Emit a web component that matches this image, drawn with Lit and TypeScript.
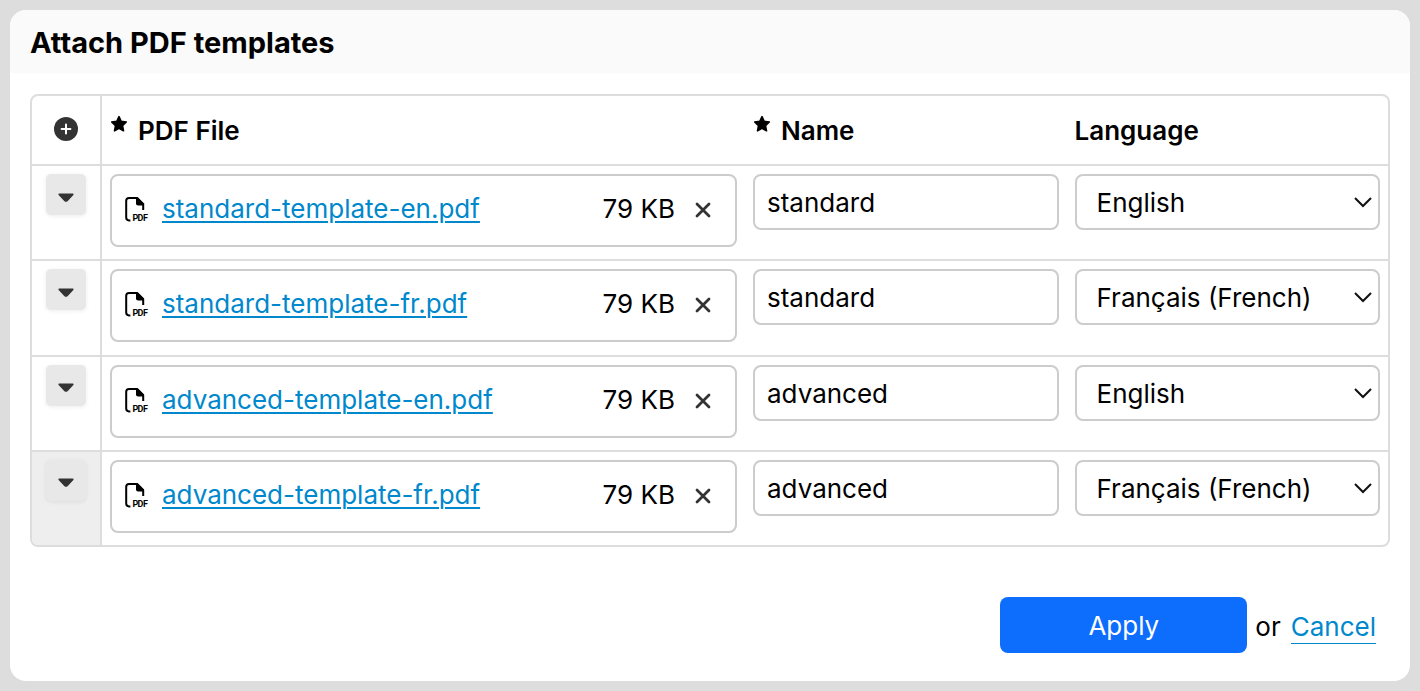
import { LitElement, html, css } from "lit";
import { customElement, state } from "lit/decorators.js";

interface Template {
  file: string;
  size: string;
  name: string;
  language: string;
}

const LANGUAGES = ["English", "Français (French)"];

const starIcon = html`<svg class="star" viewBox="0 0 18 18" aria-hidden="true">
  <path d="M9 1.6 11.2 6.3 16.3 7 12.5 10.6 13.5 15.8 9 13.3 4.5 15.8 5.5 10.6 1.7 7 6.8 6.3Z"
    fill="#000" stroke="#000" stroke-width="1.6" stroke-linejoin="round"/></svg>`;

@customElement("app-root")
export class AppRoot extends LitElement {
  @state() private items: Template[] = [
    { file: "standard-template-en.pdf", size: "79 KB", name: "standard", language: LANGUAGES[0] },
    { file: "standard-template-fr.pdf", size: "79 KB", name: "standard", language: LANGUAGES[1] },
    { file: "advanced-template-en.pdf", size: "79 KB", name: "advanced", language: LANGUAGES[0] },
    { file: "advanced-template-fr.pdf", size: "79 KB", name: "advanced", language: LANGUAGES[1] },
  ];

  @state() private activeRow = 3;

  static styles = css`
    :host {
      display: block;
      box-sizing: border-box;
      min-height: 100vh;
      padding: 10px;
      background: #ddd;
      color: #000;
      font: 400 26px/32px Inter, "Liberation Sans", sans-serif;
    }
    *, *::before, *::after { box-sizing: border-box; }
    button, input, select { font: inherit; color: inherit; margin: 0; }
    .dialog { background: #fff; border-radius: 16px; overflow: hidden; }
    .title {
      margin: 0;
      padding: 17px 20px 14px;
      background: #fafafa;
      font-size: 29px;
      line-height: 32px;
      font-weight: 700;
    }
    .body { padding: 21px 20px 28px; }
    .grid {
      display: block;
      border: 2px solid #ddd;
      border-radius: 8px;
      overflow: hidden;
    }
    thead { display: block; }
    tbody { display: grid; grid-auto-rows: 1fr; min-height: 381px; margin-bottom: -2px; }
    .row {
      display: grid;
      grid-template-columns: 70px 2fr 1fr 1fr;
      border-bottom: 2px solid #ddd;
    }
    th, td { padding: 8px; text-align: left; font-weight: inherit; min-width: 0; }
    .head th { display: flex; align-items: center; gap: 10px; padding: 19px 8px 17px; font-weight: 600; }
    .tool { border-right: 2px solid #ddd; }
    .head .tool { justify-content: center; padding: 17px 8px 19px; }
    tbody .tool { display: flex; justify-content: center; align-items: flex-start; }
    .active .tool { background: #eee; }
    .star { width: 18px; height: 18px; margin-bottom: 14px; }
    .add, .remove { display: flex; padding: 0; border: 0; background: none; }
    .add svg { width: 24px; height: 24px; }
    .menu {
      display: grid;
      place-items: center;
      width: 40px;
      height: 41px;
      padding: 0;
      border: 0;
      border-radius: 5px;
      background: #e8e8e8;
      box-shadow: 0 1px 4px rgba(0, 0, 0, 0.08);
    }
    .menu svg { width: 16px; height: 10px; margin-top: 6px; }
    .file {
      display: flex;
      align-items: center;
      height: 73px;
      padding: 0 22px 3px 12px;
      border: 2px solid #ccc;
      border-radius: 8px;
    }
    .pdf { width: 26px; height: 28px; flex: none; }
    .link { color: #0088cc; text-decoration: underline; text-decoration-thickness: 2px; text-underline-offset: 3px; }
    .file .link { flex: 1; margin-left: 12px; min-width: 0; }
    .remove { margin: 2px 0 0 18px; }
    .remove svg { width: 20px; height: 20px; }
    .field {
      display: block;
      width: 100%;
      height: 56px;
      padding: 1px 12px 0;
      border: 2px solid #ccc;
      border-radius: 8px;
      background: transparent;
    }
    .select { display: grid; align-items: center; }
    .select > * { grid-area: 1 / 1; }
    .select .field { appearance: none; padding: 2px 36px 0 20px; }
    .select svg { width: 20px; height: 12px; justify-self: end; margin-right: 7px; pointer-events: none; }
    .actions { display: flex; justify-content: flex-end; align-items: center; gap: 8px; padding: 50px 14px 0 0; }
    .apply {
      width: 247px;
      height: 56px;
      padding: 2px 0 0;
      border: 0;
      border-radius: 8px;
      background: #0d6efd;
      color: #fff;
    }
    .or { margin-top: 4px; }
    .cancel { margin: 4px 0 0 2px; color: #0088cc; text-decoration: none; border-bottom: 1px solid #0088cc; }
  `;

  private patch(index: number, change: Partial<Template>) {
    this.items = this.items.map((t, i) => (i === index ? { ...t, ...change } : t));
  }

  private add() {
    this.items = [...this.items, { file: "", size: "", name: "", language: LANGUAGES[0] }];
  }

  private remove(index: number) {
    this.items = this.items.filter((_, i) => i !== index);
  }

  private renderRow(t: Template, i: number) {
    return html`<tr class="row ${i === this.activeRow ? "active" : ""}" @mouseenter=${() => (this.activeRow = i)}>
      <td class="tool">
        <button class="menu" aria-label="Row actions">
          <svg viewBox="0 0 16 10"><path d="M1.2 1.4H14.8L9 7.6Q8 8.4 7 7.6Z" fill="#333" stroke="#333" stroke-width="1.6" stroke-linejoin="round"/></svg>
        </button>
      </td>
      <td>
        <div class="file">
          <svg class="pdf" viewBox="0 0 26 28" aria-hidden="true">
            <path d="M6.4 25.4H5Q2.2 25.4 2.2 22.6V5.8Q2.2 3 5 3H13L19.2 9.2V15" fill="none" stroke="#000" stroke-width="2"/>
            <path d="M12 2.4H14L20 8.4V10.4H14Q12 10.4 12 8.4Z"/>
            <text x="8.4 13.6 19" y="26" font-family="Roboto, sans-serif" font-size="9" font-weight="700">PDF</text>
          </svg>
          <a class="link" href="#">${t.file}</a>
          <span>${t.size}</span>
          <button class="remove" aria-label="Remove file" @click=${() => this.remove(i)}>
            <svg viewBox="0 0 20 20"><path d="M4 4 16 16M16 4 4 16" stroke="#333" stroke-width="2.8" stroke-linecap="round"/></svg>
          </button>
        </div>
      </td>
      <td>
        <input class="field" type="text" aria-label="Name" .value=${t.name}
          @input=${(e: Event) => this.patch(i, { name: (e.target as HTMLInputElement).value })} />
      </td>
      <td>
        <div class="select">
          <select class="field" aria-label="Language"
            @change=${(e: Event) => this.patch(i, { language: (e.target as HTMLSelectElement).value })}>
            ${LANGUAGES.map((l) => html`<option ?selected=${l === t.language}>${l}</option>`)}
          </select>
          <svg viewBox="0 0 20 12" aria-hidden="true"><path d="M2 2 10 10 18 2" fill="none" stroke="#111" stroke-width="2"/></svg>
        </div>
      </td>
    </tr>`;
  }

  render() {
    return html`<section class="dialog" role="dialog" aria-labelledby="title">
      <h1 class="title" id="title">Attach PDF templates</h1>
      <div class="body">
        <table class="grid">
          <thead>
            <tr class="row head">
              <th class="tool">
                <button class="add" aria-label="Add row" @click=${this.add}>
                  <svg viewBox="0 0 24 24"><circle cx="12" cy="12" r="12" fill="#333"/><path d="M12 7.6V16.4M7.6 12H16.4" stroke="#fff" stroke-width="2" stroke-linecap="round"/></svg>
                </button>
              </th>
              <th>${starIcon}<span>PDF File</span></th>
              <th>${starIcon}<span>Name</span></th>
              <th><span>Language</span></th>
            </tr>
          </thead>
          <tbody>${this.items.map((t, i) => this.renderRow(t, i))}</tbody>
        </table>
        <div class="actions">
          <button class="apply">Apply</button>
          <span class="or">or</span>
          <a class="cancel" href="#">Cancel</a>
        </div>
      </div>
    </section>`;
  }
}
